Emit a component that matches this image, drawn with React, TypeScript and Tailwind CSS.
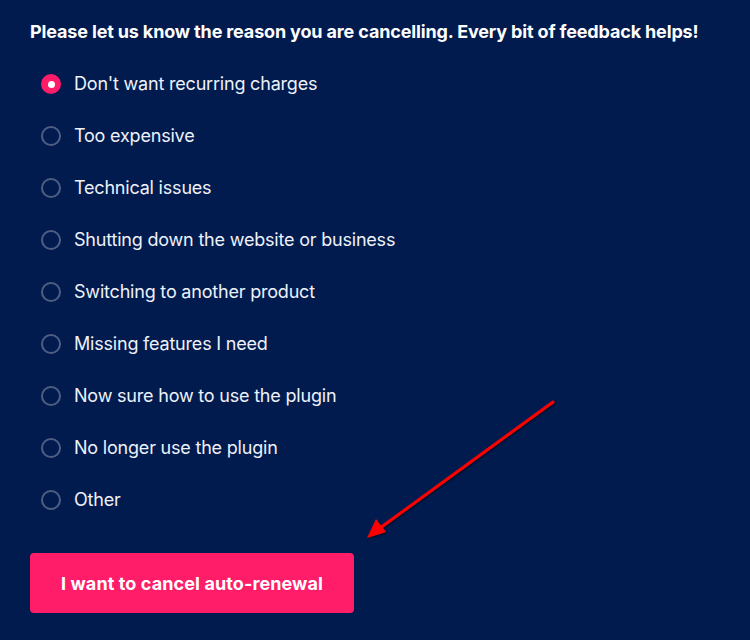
import React from "react";

const options = [
  "Don't want recurring charges",
  "Too expensive",
  "Technical issues",
  "Shutting down the website or business",
  "Switching to another product",
  "Missing features I need",
  "Now sure how to use the plugin",
  "No longer use the plugin",
  "Other",
];

export default function App() {
  return (
    <div
      className="relative w-[750px] h-[640px] overflow-hidden bg-[#011b4f] text-white"
      style={{ fontFamily: "Inter, 'Noto Sans', sans-serif" }}
    >
      <div className="pl-[30px] pt-[21px]">
        <h2 className="text-[18px] font-bold leading-[22px] tracking-[-0.15px] whitespace-nowrap">
          Please let us know the reason you are cancelling. Every bit of feedback helps!
        </h2>
        <div className="mt-[29px] flex flex-col gap-[28px] pl-[11px]">
          {options.map((o, i) => (
            <label key={o} className="flex items-center h-[24px]">
              {i === 0 ? (
                <span className="w-[20px] h-[20px] rounded-full bg-[#ff1c68] flex items-center justify-center">
                  <span className="w-[7px] h-[7px] rounded-full bg-white" />
                </span>
              ) : (
                <span className="w-[20px] h-[20px] rounded-full border-2 border-[#4f5f84]" />
              )}
              <span className="ml-[13px] text-[18px] leading-[24px] text-[#eef1f8] tracking-[-0.2px]">{o}</span>
            </label>
          ))}
        </div>
        <button className="mt-[41px] w-[324px] h-[60px] rounded-[4px] bg-[#ff1c68] text-white text-[18px] font-bold tracking-[0.1px]">
          I want to cancel auto-renewal
        </button>
      </div>
      <svg className="absolute left-0 top-0" width="750" height="640">
        <defs>
          <filter id="sh" x="-20%" y="-20%" width="140%" height="140%">
            <feDropShadow dx="1" dy="1" stdDeviation="1.2" floodColor="#000" floodOpacity="0.6" />
          </filter>
        </defs>
        <g filter="url(#sh)">
          <line x1="553" y1="402" x2="380" y2="528" stroke="#ff0000" strokeWidth="3" strokeLinecap="round" />
          <polygon points="367,538 376,519 386,532" fill="#ff0000" />
        </g>
      </svg>
    </div>
  );
}
